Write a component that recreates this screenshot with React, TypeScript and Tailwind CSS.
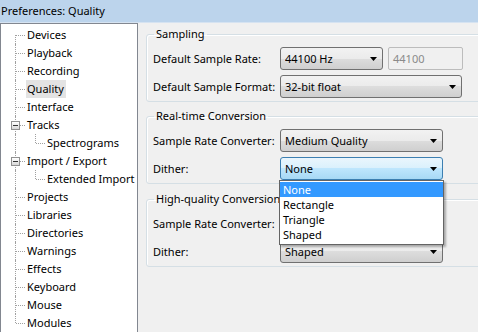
import React from "react";

type Node = {
  label: string;
  child?: boolean;
  expander?: boolean;
  selected?: boolean;
};

const nodes: Node[] = [
  { label: "Devices" },
  { label: "Playback" },
  { label: "Recording" },
  { label: "Quality", selected: true },
  { label: "Interface" },
  { label: "Tracks", expander: true },
  { label: "Spectrograms", child: true },
  { label: "Import / Export", expander: true },
  { label: "Extended Import", child: true },
  { label: "Projects" },
  { label: "Libraries" },
  { label: "Directories" },
  { label: "Warnings" },
  { label: "Effects" },
  { label: "Keyboard" },
  { label: "Mouse" },
  { label: "Modules" },
];

function TreeRow({ node, first, last }: { node: Node; first: boolean; last: boolean }) {
  return (
    <div className="relative h-[18px] flex items-center">
      <div
        className={
          "absolute left-[14px] w-0 border-l border-dotted border-[#a0a0a0] " +
          (first ? "top-[9px] bottom-0" : last ? "top-0 h-[9px]" : "top-0 bottom-0")
        }
      />
      {node.child ? (
        <>
          <div className="absolute left-[34px] top-0 h-[9px] w-0 border-l border-dotted border-[#a0a0a0]" />
          <div className="absolute left-[35px] top-[9px] w-[9px] h-0 border-t border-dotted border-[#a0a0a0]" />
          <span className="absolute left-[45px] top-0 h-[18px] flex items-center px-[1px] whitespace-nowrap">
            {node.label}
          </span>
        </>
      ) : (
        <>
          <div className="absolute left-[15px] top-[9px] w-[9px] h-0 border-t border-dotted border-[#a0a0a0]" />
          {node.expander && (
            <div className="absolute left-[10px] top-[5px] w-[9px] h-[9px] border border-[#919191] bg-gradient-to-b from-[#ffffff] to-[#d8d8d8] flex items-center justify-center">
              <div className="w-[5px] h-[1px] bg-[#333]" />
            </div>
          )}
          <span
            className={
              "absolute left-[25px] top-0 h-[18px] flex items-center pl-[1px] pr-[2px] whitespace-nowrap " +
              (node.selected ? "bg-[#e3e3e3]" : "")
            }
          >
            {node.label}
          </span>
        </>
      )}
    </div>
  );
}

function Arrow() {
  return (
    <svg width="7" height="4" viewBox="0 0 7 4" className="shrink-0">
      <path d="M0 0 H7 L3.5 4 Z" fill="#000" />
    </svg>
  );
}

function Combo({
  value,
  width,
  focused,
  children,
}: {
  value: string;
  width: string;
  focused?: boolean;
  children?: React.ReactNode;
}) {
  return (
    <div className={"relative shrink-0 " + width}>
      <div
        className={
          "h-[23px] rounded-[3px] border flex items-center pl-[4px] pr-[5px] " +
          (focused
            ? "border-[#3c7fb1] bg-[linear-gradient(to_bottom,#eaf6fd_0%,#d9f0fc_50%,#bee6fd_50%,#a7d9f5_100%)]"
            : "border-[#707070] bg-[linear-gradient(to_bottom,#f2f2f2_0%,#ebebeb_50%,#dddddd_50%,#cfcfcf_100%)]")
        }
      >
        <span className="flex-1 whitespace-nowrap overflow-hidden">{value}</span>
        <Arrow />
      </div>
      {children}
    </div>
  );
}

function Row({ label, children }: { label: string; children: React.ReactNode }) {
  return (
    <div className="flex items-center">
      <div className="w-[127px] shrink-0 whitespace-nowrap">{label}</div>
      {children}
    </div>
  );
}

function Group({ title, children, className }: { title: string; children: React.ReactNode; className?: string }) {
  return (
    <fieldset
      className={
        "ml-[8px] w-[380px] border border-[#d5dfe5] rounded-[3px] px-[6px] pt-[5px] pb-[3px] shadow-[inset_1px_1px_0_#fff] " +
        (className ?? "")
      }
    >
      <legend className="ml-[1px] px-[2px] leading-[16px] whitespace-nowrap">{title}</legend>
      <div className="flex flex-col gap-[5px]">{children}</div>
    </fieldset>
  );
}

export default function App() {
  return (
    <div
      className="w-[478px] h-[332px] overflow-hidden bg-[#f0f0f0] text-black text-[11px] leading-[16px] flex flex-col"
      style={{ fontFamily: '"Noto Sans", "Open Sans", sans-serif' }}
    >
      <div className="h-[23px] shrink-0 bg-[#bcd4ec] border-b border-[#d6e3f1] flex items-center pl-[1px]">
        Preferences: Quality
      </div>
      <div className="flex flex-1 min-h-0">
        <div className="w-[138px] shrink-0 bg-white border-t border-l border-r border-[#828790] pt-[2px]">
          {nodes.map((n, i) => (
            <TreeRow key={n.label} node={n} first={i === 0} last={i === nodes.length - 1} />
          ))}
        </div>
        <div className="flex-1 flex flex-col pt-[3px]">
          <Group title="Sampling">
            <Row label="Default Sample Rate:">
              <Combo value="44100 Hz" width="w-[103px]" />
              <div className="ml-[5px] w-[75px] h-[23px] shrink-0 rounded-[2px] border border-[#bcbcbc] text-[#8a8a8a] flex items-center pl-[4px]">
                44100
              </div>
            </Row>
            <Row label="Default Sample Format:">
              <Combo value="32-bit float" width="w-[182px]" />
            </Row>
          </Group>
          <Group title="Real-time Conversion" className="mt-[6px] relative z-10">
            <Row label="Sample Rate Converter:">
              <Combo value="Medium Quality" width="w-[163px]" />
            </Row>
            <Row label="Dither:">
              <Combo value="None" width="w-[163px]" focused>
                <div className="absolute left-[-1px] top-full w-[165px] bg-white border border-[#646464] shadow-[2px_2px_2px_rgba(0,0,0,0.3)] pt-[1px] pb-[2px] leading-[15px]">
                  <div className="bg-[#3399ff] text-white pl-[3px]">None</div>
                  <div className="pl-[3px]">Rectangle</div>
                  <div className="pl-[3px]">Triangle</div>
                  <div className="pl-[3px]">Shaped</div>
                </div>
              </Combo>
            </Row>
          </Group>
          <Group title="High-quality Conversion" className="mt-[7px]">
            <Row label="Sample Rate Converter:">
              <Combo value="" width="w-[163px]" />
            </Row>
            <Row label="Dither:">
              <Combo value="Shaped" width="w-[163px]" />
            </Row>
          </Group>
        </div>
      </div>
    </div>
  );
}
